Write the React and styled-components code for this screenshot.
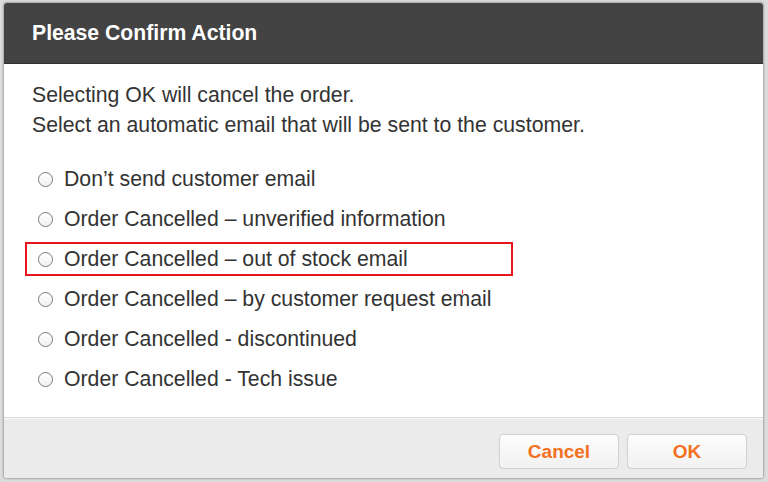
import React from "react";
import styled, { createGlobalStyle } from "styled-components";

const GlobalStyle = createGlobalStyle`
  html, body {
    margin: 0;
    padding: 0;
    background: #dcdcdc;
    font-family: "Liberation Sans", Arial, sans-serif;
  }
`;

const Page = styled.div`
  width: 768px;
  height: 482px;
  padding: 3px 5px 4px 4px;
  box-sizing: border-box;
  background: #dcdcdc;
`;

const Dialog = styled.div`
  height: 100%;
  display: flex;
  flex-direction: column;
  border-radius: 3px;
  overflow: hidden;
  box-shadow: 0 0 2px 1px rgba(0, 0, 0, 0.25);
  background: #fff;
`;

const Header = styled.div`
  height: 60px;
  background: #434343;
  color: #fff;
  display: flex;
  align-items: center;
  padding-left: 28px;
  font-size: 21.2px;
  font-weight: bold;
  border-bottom: 1px solid #2f2f2f;
`;

const Body = styled.div`
  flex: 1;
  padding: 16px 28px 0;
  color: #333;
  font-size: 21.25px;
`;

const Intro = styled.p`
  margin: 0 0 19px;
  line-height: 30px;
`;

const Options = styled.div`
  display: flex;
  flex-direction: column;
`;

const Option = styled.label`
  position: relative;
  display: flex;
  align-items: center;
  height: 40px;
`;

const Highlighted = styled(Option)`
  height: 34px;
  width: 488px;
  margin: 3px 0 3px -7px;
  padding-left: 5px;
  border: 2px solid #e8141c;
  box-sizing: border-box;
`;

const Radio = styled.span`
  width: 13px;
  height: 13px;
  border: 1px solid #7a7a7a;
  border-radius: 50%;
  margin-left: 6px;
  margin-right: 11px;
  flex-shrink: 0;
  background: linear-gradient(#fff, #f2f2f2);
`;

const Tick = styled.span`
  position: absolute;
  left: 430px;
  top: 11px;
  width: 1px;
  height: 4px;
  background: #f04040;
`;

const Footer = styled.div`
  height: 61px;
  box-sizing: border-box;
  flex-shrink: 0;
  background: #ebebeb;
  border-top: 1px solid #dadada;
  box-shadow: inset 0 1px 0 #fafafa;
  display: flex;
  justify-content: flex-end;
  align-items: flex-start;
  gap: 8px;
  padding: 16px 16px 0 0;
`;

const Button = styled.button`
  width: 120px;
  height: 35px;
  border: 1px solid #d0d0d0;
  border-radius: 4px;
  background: linear-gradient(#fdfdfd, #f1f1f1);
  color: #f37021;
  font-family: "Liberation Sans", Arial, sans-serif;
  font-size: 19px;
  font-weight: bold;
  cursor: pointer;
`;

const choices = [
  "Don\u2019t send customer email",
  "Order Cancelled \u2013 unverified information",
  "Order Cancelled \u2013 out of stock email",
  "Order Cancelled \u2013 by customer request email",
  "Order Cancelled - discontinued",
  "Order Cancelled - Tech issue",
];

export default function App() {
  return (
    <Page>
      <GlobalStyle />
      <Dialog>
        <Header>Please Confirm Action</Header>
        <Body>
          <Intro>
            Selecting OK will cancel the order.
            <br />
            Select an automatic email that will be sent to the customer.
          </Intro>
          <Options>
            {choices.map((c, i) => {
              const Row = i === 2 ? Highlighted : Option;
              return (
                <Row key={c}>
                  <Radio />
                  {c}
                  {i === 3 && <Tick />}
                </Row>
              );
            })}
          </Options>
        </Body>
        <Footer>
          <Button>Cancel</Button>
          <Button>OK</Button>
        </Footer>
      </Dialog>
    </Page>
  );
}
